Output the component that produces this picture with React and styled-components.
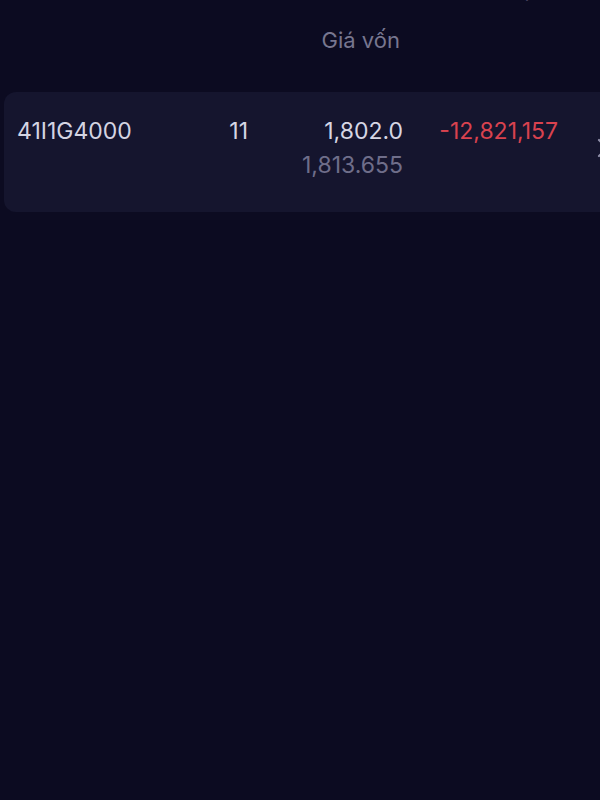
import React from "react";
import styled, { createGlobalStyle } from "styled-components";

const GlobalStyle = createGlobalStyle`
  html, body {
    margin: 0;
    padding: 0;
    background: #0c0b21;
    overflow: hidden;
  }
  body {
    font-family: Inter, "Liberation Sans", sans-serif;
  }
`;

const holdings = [
  {
    code: "41I1G4000",
    qty: "11",
    price: "1,802.0",
    cost: "1,813.655",
    pnl: "-12,821,157",
  },
];

const Portfolio = () => {
  return (
    <Page>
      <GlobalStyle />
      <Header>
        <HeadRow>
          <span />
          <span />
          <HeadCell />
          <HeadCell $inset>Giá trị,</HeadCell>
        </HeadRow>
        <HeadRow>
          <span />
          <span />
          <HeadCell>Giá vốn</HeadCell>
          <HeadCell />
        </HeadRow>
      </Header>

      {holdings.map((h) => (
        <Card key={h.code}>
          <Code>{h.code}</Code>
          <Num>{h.qty}</Num>
          <PriceCol>
            <Num>{h.price}</Num>
            <Num $muted>{h.cost}</Num>
          </PriceCol>
          <Num $red>{h.pnl}</Num>
          <Chevron>
            <svg width="14" height="20" viewBox="0 0 14 20" fill="none">
              <path
                d="M3 2l8 8-8 8"
                stroke="#8f8ea8"
                strokeWidth="2.2"
                strokeLinecap="round"
                strokeLinejoin="round"
              />
            </svg>
          </Chevron>
        </Card>
      ))}
    </Page>
  );
};

const Page = styled.div`
  width: 660px;
  height: 800px;
  background: #0c0b21;
  overflow: hidden;
`;

const Header = styled.div`
  margin-top: -29px;
  padding-left: 17px;
  display: flex;
  flex-direction: column;
  gap: 18px;
`;

const HeadRow = styled.div`
  display: grid;
  grid-template-columns: 170px 61px 152px 158px;
  height: 34px;
  align-items: center;
`;

const HeadCell = styled.div`
  text-align: right;
  font-size: 22px;
  color: #77768f;
  white-space: nowrap;
  padding-right: ${({ $inset }) => ($inset ? "22px" : "0")};
`;

const Card = styled.div`
  margin: 35px 0 0 4px;
  padding: 22px 0 30px 13px;
  background: #15152e;
  border-radius: 12px;
  display: grid;
  grid-template-columns: 170px 61px 155px 155px 38px 20px;
  align-items: start;
`;

const Code = styled.div`
  font-size: 23px;
  line-height: 34px;
  color: #d4d4e2;
`;

const Num = styled.div`
  font-size: 23px;
  line-height: 34px;
  text-align: right;
  white-space: nowrap;
  color: ${({ $muted, $red }) =>
    $red ? "#d9424f" : $muted ? "#6f6e8a" : "#d6d6e4"};
`;

const PriceCol = styled.div`
  display: flex;
  flex-direction: column;
`;

const Chevron = styled.div`
  grid-column: 6;
  align-self: center;
  display: flex;
`;

export default Portfolio;
